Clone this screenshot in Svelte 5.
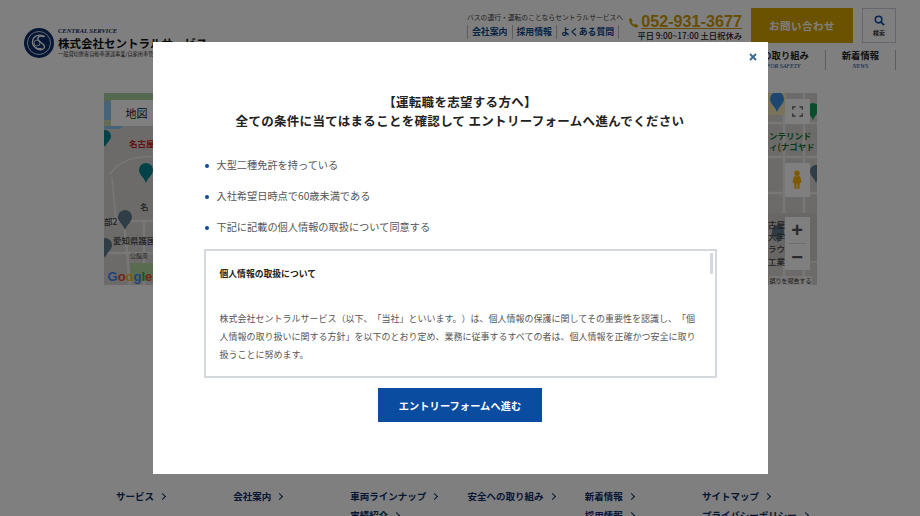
<script>
	const navItems = [
		{ ja: 'サービス', en: 'SERVICE' },
		{ ja: '会社案内', en: 'COMPANY' },
		{ ja: '車両ラインナップ', en: 'LINE UP' },
		{ ja: '安全への取り組み', en: 'EFFORT FOR SAFETY' },
		{ ja: '新着情報', en: 'NEWS' }
	];

	const footerCols = [
		['サービス'],
		['会社案内'],
		['車両ラインナップ', '実績紹介'],
		['安全への取り組み'],
		['新着情報', '採用情報'],
		['サイトマップ', 'プライバシーポリシー']
	];

	const conditions = [
		'大型二種免許を持っている',
		'入社希望日時点で60歳未満である',
		'下記に記載の個人情報の取扱について同意する'
	];
</script>

<div class="page">
	<header class="header">
		<div class="logo">
			<svg class="logo__mark" viewBox="0 0 30 30" aria-hidden="true">
				<circle cx="15" cy="15" r="15" fill="#0b2e6b" />
				<circle cx="15" cy="15" r="11.500" fill="none" stroke="#fff" stroke-width="0.8" />
				<path d="M21 8.500c-5-3-12-1-12.500 5-.4 5 4 8 9 7" fill="none" stroke="#fff" stroke-width="1.300" />
				<path d="M20 9c-3-2-7-.5-6 2.500s7 4 6.500 7.500-6 3.500-9 1" fill="none" stroke="#fff" stroke-width="1.300" />
				<circle cx="13" cy="15" r="3" fill="none" stroke="#fff" stroke-width="0.8" />
			</svg>
			<div class="logo__text">
				<span class="logo__en">CENTRAL SERVICE</span>
				<span class="logo__name">株式会社セントラルサービス</span>
				<span class="logo__sub">一般貸切旅客自動車運送事業/自家用車管理業</span>
			</div>
		</div>

		<div class="header__right">
			<div class="header__top">
				<div class="sublinks">
					<p class="sublinks__lead">バスの運行・運転のことならセントラルサービスへ</p>
					<ul class="sublinks__list">
						<li>会社案内</li>
						<li>採用情報</li>
						<li>よくある質問</li>
					</ul>
				</div>
				<div class="tel">
					<div class="tel__number">
						<svg viewBox="0 0 12 12" aria-hidden="true">
							<path d="M1.200 1.500 3.300.8 5 3.700 3.800 5c.6 1.300 1.600 2.300 2.900 3l1.300-1.200L11 8.600l-.7 2.100C5.500 11.200.8 6.500 1.200 1.500z" fill="#cf9c00" />
						</svg>
						<span>052-931-3677</span>
					</div>
					<p class="tel__hours">平日 9:00~17:00 土日祝休み</p>
				</div>
				<div class="contact">お問い合わせ</div>
				<div class="search">
					<svg viewBox="0 0 12 12" aria-hidden="true">
						<circle cx="5" cy="5" r="3.600" fill="none" stroke="#0a4da0" stroke-width="1.700" />
						<path d="m7.700 7.700 3.300 3.300" stroke="#0a4da0" stroke-width="2" />
					</svg>
					<span>検索</span>
				</div>
			</div>
			<ul class="nav">
				{#each navItems as item}
					<li class="nav__item">
						<span class="nav__ja">{item.ja}</span>
						<span class="nav__en">{item.en}</span>
					</li>
				{/each}
			</ul>
		</div>
	</header>

	<section class="map">
		<svg class="map__base" viewBox="0 0 713 192" aria-hidden="true">
			<rect width="713" height="192" fill="#d9d7d3" />
			<rect width="60" height="8" fill="#a9d3a0" />
			<path d="M0 8h10l20 4 30-4v22H24l-8 6H0z" fill="#8fc7f0" />
			<path d="M0 30h60" stroke="#c8d8a8" stroke-width="6" />
			<path d="M0 128h60M20 128l6 64M0 160h60M40 128v64M664 30h49M664 64h49M664 100h49M664 135h49M664 168h49M680 0v192M700 0v192" stroke="#eee" stroke-width="2.500" fill="none" />
			<path d="M6 82c8-16 30-20 54-18M8 84l4 44" stroke="#eee" stroke-width="1.500" fill="none" />
			<rect x="26" y="170" width="34" height="18" fill="#b5d8a0" />
			<rect x="664" y="0" width="18" height="22" fill="#f5e6b8" />
			<path d="M660 120h53v48h-53z" fill="#d0cecb" />
			<g fill="#00858f">
				<path d="M-5 43a6 6 0 0 1 12 0c0 4-4 6-6 11-2-5-6-7-6-11z" />
				<path d="M35 77a7 7 0 0 1 14 0c0 5-5 7-7 13-2-6-7-8-7-13z" />
			</g>
			<path d="M14 124a7 7 0 0 1 14 0c0 5-5 7-7 13-2-6-7-8-7-13zM-6 152a7 7 0 0 1 14 0c0 5-5 7-7 13-2-6-7-8-7-13z" fill="#5e7a8c" />
			<path d="M666 6a7 7 0 0 1 14 0c0 5-5 7-7 13-2-6-7-8-7-13z" fill="#3a8fe0" />
			<path d="M703 16a6 6 0 0 1 12 0c0 4-4 6-6 11-2-5-6-7-6-11z" fill="#0f9d58" />
			<path d="M668 138a6 6 0 0 1 12 0c0 5-4 6-6 12-2-6-6-7-6-12zM706 78a6 6 0 0 1 12 0c0 5-4 6-6 12-2-6-6-7-6-12z" fill="#5e7a8c" />
			<text x="25" y="54" class="map__label map__label--red">名古屋城</text>
			<text x="36" y="117" class="map__label">名</text>
			<text x="0" y="132" class="map__label">部2</text>
			<text x="9" y="151" class="map__label">愛知県護国</text>
			<text x="26" y="165" class="map__small">公館東</text>
			<text x="665" y="46" class="map__label map__label--green">ンテリンド</text>
			<text x="665" y="57" class="map__label map__label--green">ィ(ナゴヤド</text>
			<text x="664" y="135" class="map__label">古屋</text>
			<text x="664" y="147" class="map__label">大学</text>
			<text x="664" y="159" class="map__label">ラウ</text>
			<text x="664" y="172" class="map__label">工業</text>
		</svg>
		<div class="map__type">地図</div>
		<div class="map__google">
			<span style="color:#4285f4">G</span><span style="color:#ea4335">o</span><span style="color:#fbbc05">o</span><span style="color:#4285f4">g</span><span style="color:#34a853">l</span><span style="color:#ea4335">e</span>
		</div>
		<div class="map__controls">
			<div class="ctl">
				<svg viewBox="0 0 14 14" aria-hidden="true">
					<path d="M1 4.500V1h3.500M9.500 1H13v3.500M13 9.500V13H9.500M4.500 13H1V9.500" fill="none" stroke="#555" stroke-width="1.600" />
				</svg>
			</div>
			<div class="ctl ctl--peg">
				<svg viewBox="0 0 12 22" aria-hidden="true">
					<circle cx="6" cy="3.500" r="3" fill="#ffb300" />
					<path d="M2.500 7h7L11 14H9.300L8.500 21H6.500V15h-1v6h-2L2.700 14H1z" fill="#ffb300" />
				</svg>
			</div>
			<div class="ctl ctl--zoom">
				<span>+</span>
				<i></i>
				<span>−</span>
			</div>
		</div>
		<div class="map__report">誤りを報告する</div>
	</section>

	<footer class="footer">
		{#each footerCols as col}
			<ul class="footer__col">
				{#each col as link}
					<li>{link}<b class="chevron"></b></li>
				{/each}
			</ul>
		{/each}
	</footer>
</div>

<div class="overlay">
	<div class="modal">
		<button class="modal__close" aria-label="閉じる">
			<svg viewBox="0 0 8 8" aria-hidden="true">
				<path d="m1 1 6 6M7 1 1 7" stroke="#3a6a94" stroke-width="1.900" />
			</svg>
		</button>
		<h2 class="modal__title">
			【運転職を志望する方へ】<br />全ての条件に当てはまることを確認して エントリーフォームへ進んでください
		</h2>
		<ul class="conditions">
			{#each conditions as item}
				<li>{item}</li>
			{/each}
		</ul>
		<div class="policy">
			<span class="policy__thumb"></span>
			<p class="policy__title">個人情報の取扱について</p>
			<p class="policy__body">
				株式会社セントラルサービス（以下、「当社」といいます。）は、個人情報の保護に関してその重要性を認識し、「個人情報の取り扱いに関する方針」を以下のとおり定め、業務に従事するすべての者は、個人情報を正確かつ安全に取り扱うことに努めます。
			</p>
		</div>
		<button class="entry">エントリーフォームへ進む</button>
	</div>
</div>

<style>
	:global(html),
	:global(body) {
		margin: 0;
		overflow: hidden;
	}

	:global(body) {
		font-family: 'Noto Sans CJK JP', 'Noto Sans', sans-serif;
		background: #fff;
		text-spacing-trim: space-all;
	}

	ul {
		list-style: none;
		margin: 0;
		padding: 0;
	}

	p {
		margin: 0;
	}

	.page {
		height: 516px;
		overflow: hidden;
		display: flex;
		flex-direction: column;
	}

	/* Header */
	.header {
		display: flex;
		justify-content: space-between;
		padding: 8px 24px 0;
		height: 93px;
		box-sizing: border-box;
		flex-shrink: 0;
	}

	.logo {
		display: flex;
		gap: 4px;
		margin-top: 20px;
		height: 30px;
	}

	.logo__mark {
		width: 30px;
		height: 30px;
	}

	.logo__text {
		display: flex;
		flex-direction: column;
		margin-top: -1px;
		white-space: nowrap;
	}

	.logo__en {
		font: italic bold 6.500px/7px 'Liberation Serif', serif;
		color: #0b2e6b;
	}

	.logo__name {
		font: 700 11.500px/14px 'Noto Sans CJK JP', sans-serif;
		color: #111;
		margin-top: 2px;
	}

	.logo__sub {
		font: 400 5.200px/7px 'Noto Sans CJK JP', sans-serif;
		color: #333;
	}

	.header__right {
		display: flex;
		flex-direction: column;
		align-items: flex-end;
	}

	.header__top {
		display: flex;
		align-items: flex-start;
	}

	.sublinks {
		width: 152px;
		margin-right: 9px;
		padding-top: 5px;
	}

	.sublinks__lead {
		font-size: 6.800px;
		line-height: 8px;
		color: #444;
		white-space: nowrap;
	}

	.sublinks__list {
		display: flex;
		margin-top: 4px;
		font-size: 8.900px;
		font-weight: 700;
		line-height: 14px;
		color: #0b4a8f;
		border-right: 1px solid #bbb;
		border-left: 1px solid #bbb;
		width: fit-content;
	}

	.sublinks__list li {
		padding: 0 4px;
		white-space: nowrap;
	}

	.sublinks__list li + li {
		border-left: 1px solid #bbb;
	}

	.tel {
		width: 114px;
		margin-right: 9px;
		text-align: right;
	}

	.tel__number {
		display: flex;
		align-items: center;
		justify-content: flex-end;
		gap: 1px;
		font: 700 16.200px/14px 'Liberation Sans', sans-serif;
		color: #cf9c00;
		margin-top: 6px;
		white-space: nowrap;
	}

	.tel__number svg {
		width: 12px;
		height: 12px;
		margin-top: 2px;
		margin-right: 1px;
	}

	.tel__number span {
		border-bottom: 1px solid #cf9c00;
	}

	.tel__hours {
		font: 500 8.300px/12px 'Noto Sans CJK JP', sans-serif;
		color: #222;
		white-space: nowrap;
	}

	.contact {
		width: 102px;
		height: 35px;
		background: #d6a400;
		color: #fff;
		font-size: 10.500px;
		font-weight: 700;
		letter-spacing: 0.5px;
		display: flex;
		align-items: center;
		justify-content: center;
		margin-right: 9px;
	}

	.search {
		width: 32px;
		height: 33px;
		border: 1px solid #ccd;
		display: flex;
		flex-direction: column;
		align-items: center;
		justify-content: center;
		font-size: 6px;
		font-weight: 700;
		color: #333;
	}

	.search svg {
		width: 11px;
		height: 11px;
		margin-bottom: 2px;
	}

	.nav {
		display: flex;
		margin-top: 7px;
	}

	.nav__item {
		display: flex;
		flex-direction: column;
		align-items: center;
		padding: 0 16px;
		height: 20px;
		border-right: 1px solid #bbb;
		white-space: nowrap;
	}

	.nav__ja {
		font-size: 9.300px;
		font-weight: 700;
		line-height: 11px;
		color: #222;
	}

	.nav__en {
		font: italic 6px/9px 'Liberation Serif', serif;
		color: #0b4a8f;
		margin-top: 1px;
	}

	/* Map */
	.map {
		position: relative;
		align-self: center;
		width: 713px;
		height: 192px;
		overflow: hidden;
		flex-shrink: 0;
	}

	.map__base {
		display: block;
		width: 100%;
		height: 100%;
	}

	.map__label {
		font: 500 8.500px 'Noto Sans CJK JP', sans-serif;
		fill: #444;
	}

	.map__label--red {
		font-weight: 700;
		fill: #c5221f;
	}

	.map__label--green {
		fill: #137333;
		font-weight: 700;
	}

	.map__small {
		font: 400 6px 'Noto Sans CJK JP', sans-serif;
		fill: #555;
	}

	.map__type {
		position: absolute;
		left: 7px;
		top: 7px;
		width: 52px;
		height: 26px;
		background: #fff;
		color: #222;
		font-size: 11px;
		display: flex;
		align-items: center;
		justify-content: center;
	}

	.map__google {
		position: absolute;
		left: 4px;
		bottom: 1px;
		font: 700 13px/14px 'Liberation Sans', sans-serif;
	}

	.map__controls {
		position: absolute;
		right: 7px;
		top: 6px;
		display: flex;
		flex-direction: column;
		gap: 39px;
	}

	.ctl {
		width: 25px;
		height: 25px;
		background: #fff;
		display: flex;
		align-items: center;
		justify-content: center;
	}

	.ctl svg {
		width: 11px;
		height: 11px;
	}

	.ctl--peg {
		height: 34px;
		margin-bottom: -19px;
	}

	.ctl--peg svg {
		width: 12px;
		height: 20px;
	}

	.ctl--zoom {
		height: 53px;
		flex-direction: column;
		color: #555;
		font: 700 20px/26px 'Liberation Sans', sans-serif;
	}

	.ctl--zoom i {
		width: 18px;
		height: 1px;
		background: #ddd;
	}

	.map__report {
		position: absolute;
		right: 5px;
		bottom: 0;
		font-size: 6px;
		line-height: 9px;
		color: #333;
		background: rgba(255, 255, 255, 0.6);
	}

	/* Footer */
	.footer {
		display: grid;
		grid-template-columns: repeat(6, 117.200px);
		justify-content: center;
		margin-top: 206px;
		padding-left: 15px;
		width: 100%;
		box-sizing: border-box;
	}

	.footer__col li {
		font-size: 9.500px;
		font-weight: 700;
		line-height: 11px;
		color: #0b2e6b;
		margin-bottom: 8px;
		white-space: nowrap;
	}

	.chevron {
		display: inline-block;
		width: 4px;
		height: 4px;
		margin: 0 0 1px 6px;
		border-top: 1.500px solid #0b2e6b;
		border-right: 1.500px solid #0b2e6b;
		transform: rotate(45deg);
	}

	/* Modal */
	.overlay {
		position: fixed;
		inset: 0;
		background: rgba(0, 0, 0, 0.5);
		backdrop-filter: blur(0.5px);
		display: flex;
		align-items: center;
		justify-content: center;
	}

	.modal {
		position: relative;
		width: 615px;
		height: 432px;
		background: #fff;
		box-sizing: border-box;
		padding: 50px 51px 0;
		display: flex;
		flex-direction: column;
	}

	.modal__close {
		position: absolute;
		top: 11px;
		right: 11px;
		width: 8px;
		height: 8px;
		padding: 0;
		border: 0;
		background: none;
		display: flex;
	}

	.modal__title {
		margin: 0;
		text-align: center;
		font-size: 12.500px;
		font-weight: 700;
		line-height: 19px;
		letter-spacing: 0.3px;
		color: #222;
		white-space: nowrap;
	}

	.conditions {
		margin-top: 19px;
	}

	.conditions li {
		position: relative;
		padding-left: 13px;
		font-size: 10.200px;
		line-height: 31px;
		color: #555;
	}

	.conditions li::before {
		content: '';
		position: absolute;
		left: 1px;
		top: 15px;
		width: 4px;
		height: 4px;
		border-radius: 50%;
		background: #0a4da0;
	}

	.policy {
		position: relative;
		height: 129px;
		box-sizing: border-box;
		margin-top: 7px;
		border: 2px solid #d5d8dc;
		padding: 16px 18px 0 14px;
		overflow: hidden;
		flex-shrink: 0;
	}

	.policy__thumb {
		position: absolute;
		top: 2px;
		right: 2px;
		width: 3px;
		height: 21px;
		background: #d5d8dc;
	}

	.policy__title {
		font-size: 8.800px;
		font-weight: 700;
		line-height: 14px;
		color: #222;
		margin-bottom: 29px;
	}

	.policy__body {
		font-size: 9px;
		line-height: 18px;
		color: #555;
	}

	.entry {
		align-self: center;
		width: 164px;
		height: 34px;
		margin-top: 10px;
		border: 0;
		background: #0a4da0;
		color: #fff;
		font-family: inherit;
		font-size: 10.200px;
		font-weight: 700;
		letter-spacing: 0.1px;
	}
</style>
